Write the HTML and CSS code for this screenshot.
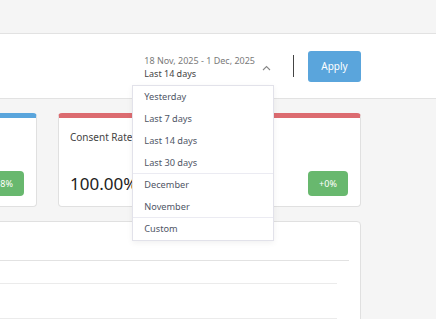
FILE: index.html
```html
<!DOCTYPE html>
<html lang="en">
<head>
    <meta charset="UTF-8">
    <meta name="viewport" content="width=device-width, initial-scale=1.0">
    <title>Consent Dashboard</title>
    <link rel="stylesheet" href="styles.css">
</head>
<body>

    <div class="topbar"></div>

    <div class="header">
        <div class="picker">
            <div class="picker-text">
                <div class="range">18 Nov, 2025 - 1 Dec, 2025</div>
                <div class="preset">Last 14 days</div>
            </div>
            <svg class="chevron" width="9" height="6" viewBox="0 0 9 6">
                <path d="M1 5 L4.5 1.5 L8 5" fill="none" stroke="#888" stroke-width="1.1"/>
            </svg>

            <ul class="dropdown">
                <li>Yesterday</li>
                <li>Last 7 days</li>
                <li>Last 14 days</li>
                <li class="group-end">Last 30 days</li>
                <li>December</li>
                <li class="group-end">November</li>
                <li>Custom</li>
            </ul>
        </div>
        <div class="divider"></div>
        <button class="btn">Apply</button>
    </div>

    <div class="main">
        <div class="cards">
            <div class="card card-blue">
                <div class="card-title"></div>
                <div class="card-foot">
                    <div class="card-value"></div>
                    <span class="badge">+8%</span>
                </div>
            </div>
            <div class="card card-red">
                <div class="card-title">Consent Rate</div>
                <div class="card-foot">
                    <div class="card-value">100.00%</div>
                    <span class="badge">+0%</span>
                </div>
            </div>
        </div>

        <div class="panel">
            <div class="row row-wide"></div>
            <div class="row row-mid"></div>
            <div class="row"></div>
        </div>
    </div>

</body>
</html>
```

FILE: styles.css
```css
body {
    font-family: "Noto Sans", "Open Sans", sans-serif;
    background-color: #f5f5f5;
    margin: 0;
    padding: 0;
    overflow: hidden;
}

.topbar {
    height: 33px;
    border-bottom: 1px solid #e2e2e2;
}

.header {
    height: 64px;
    background-color: white;
    border-bottom: 1px solid #e2e2e2;
    display: flex;
    justify-content: flex-end;
    align-items: center;
    padding-right: 75px;
}

.picker {
    position: relative;
    display: flex;
    align-items: center;
    margin-top: 2px;
}

.picker-text {
    font-size: 9px;
    line-height: 13px;
}

.range {
    color: #7a7a7a;
}

.preset {
    color: #444;
}

.chevron {
    margin-left: 7px;
    margin-top: 2px;
}

.divider {
    width: 1px;
    height: 22px;
    background-color: #444;
    margin: 0 14px 0 22px;
}

.btn {
    width: 53px;
    height: 31px;
    font-family: inherit;
    font-size: 10px;
    color: white;
    background-color: #5aa5dc;
    border: none;
    border-radius: 3px;
    padding: 0;
}

.dropdown {
    position: absolute;
    top: 31px;
    left: -12px;
    width: 140px;
    margin: 0;
    padding: 0;
    list-style: none;
    background-color: white;
    border: 1px solid #e2e2ea;
    box-shadow: 0 2px 6px rgba(0, 0, 0, 0.06);
    z-index: 5;
}

.dropdown li {
    height: 22px;
    line-height: 21px;
    padding-left: 11px;
    font-size: 9.2px;
    color: #4f5666;
}

.dropdown li.group-end {
    border-bottom: 1px solid #ebebf2;
    height: 21px;
}

.main {
    width: 627px;
    margin-left: -266px;
    padding-top: 14px;
}

.cards {
    display: grid;
    grid-template-columns: 303px 303px;
    gap: 21px;
}

.card {
    box-sizing: border-box;
    height: 94px;
    background-color: white;
    border: 1px solid #e0e0e0;
    border-top-width: 5px;
    border-radius: 4px;
    padding: 12px 12px 10px 11px;
    display: flex;
    flex-direction: column;
    justify-content: space-between;
}

.card-blue {
    border-top-color: #5aa5dc;
}

.card-red {
    border-top-color: #dc6b70;
}

.card-title {
    font-size: 10px;
    color: #444;
    min-height: 14px;
}

.card-foot {
    display: flex;
    justify-content: space-between;
    align-items: flex-end;
}

.card-value {
    font-size: 17px;
    color: #222;
    line-height: 20px;
    margin-bottom: 2px;
}

.badge {
    width: 40px;
    height: 25px;
    line-height: 25px;
    text-align: center;
    font-size: 9px;
    color: white;
    background-color: #68b86e;
    border-radius: 4px;
}

.panel {
    margin-top: 14px;
    height: 120px;
    background-color: white;
    border: 1px solid #e0e0e0;
    border-radius: 4px;
    padding-top: 38px;
}

.row {
    height: 34px;
    border-top: 1px solid #ebebeb;
    margin-right: 23px;
}

.row-wide {
    height: 22px;
    margin-right: 11px;
    border-top-color: #e2e2e2;
}
```
